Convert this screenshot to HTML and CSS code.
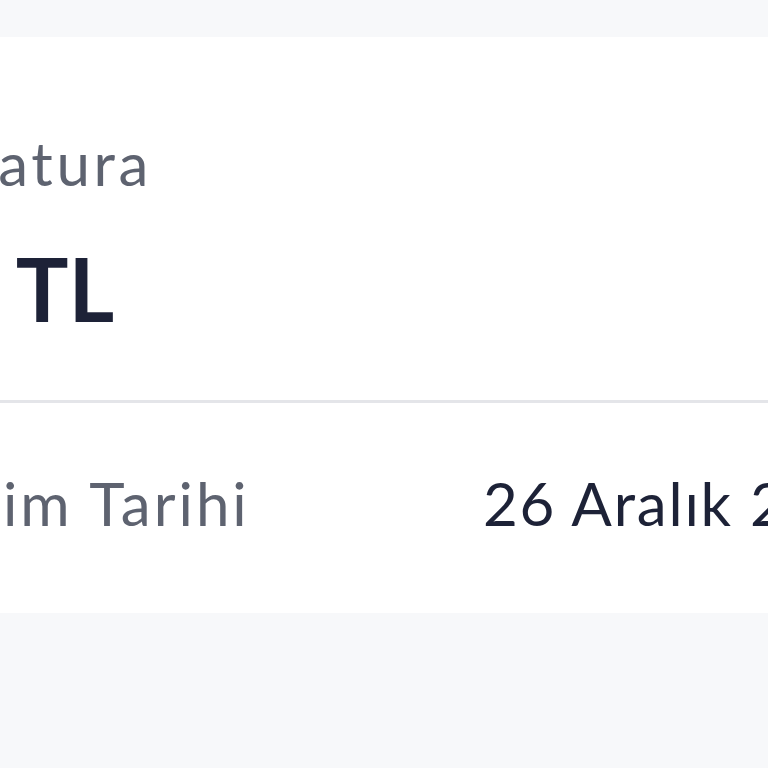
FILE: index.html
```html
<!DOCTYPE html>
<html lang="tr">
<head>
    <meta charset="UTF-8">
    <meta name="viewport" content="width=device-width, initial-scale=1.0">
    <title>Fatura</title>
    <link rel="stylesheet" href="styles.css">
</head>
<body>
    <div class="page">
        <div class="invoice-card">
            <div class="invoice-header">
                <p class="invoice-title">Fatura</p>
                <p class="invoice-amount">0 TL</p>
            </div>
            <div class="invoice-row">
                <span class="row-label">Teslim Tarihi</span>
                <span class="row-value">26 Aralık 2024</span>
            </div>
        </div>
    </div>
</body>
</html>
```

FILE: styles.css
```css
html, body {
    margin: 0;
    padding: 0;
    background-color: #f7f8fa;
    overflow: hidden;
}

body {
    font-family: Lato, "Noto Sans", sans-serif;
    height: 768px;
}

.page {
    padding-top: 37px;
}

.invoice-card {
    background-color: #fff;
    margin-left: -130px;
    width: 1100px;
}

.invoice-header {
    padding: 90px 0 68px 95px;
    border-bottom: 3px solid #e4e5e9;
}

.invoice-title {
    margin: 0 0 45px;
    font-size: 60px;
    line-height: 72px;
    color: #5e6370;
    letter-spacing: 0.06em;
}

.invoice-amount {
    margin: 0 0 0 -19px;
    font-size: 88px;
    line-height: 88px;
    font-weight: 700;
    color: #1d2237;
}

.invoice-row {
    display: grid;
    grid-template-columns: 592px auto;
    padding: 64px 0 74px 21px;
    font-size: 60px;
    line-height: 72px;
    letter-spacing: 0.05em;
    white-space: nowrap;
}

.row-label {
    color: #5e6370;
}

.row-value {
    color: #1d2237;
    letter-spacing: 0.03em;
}
```
